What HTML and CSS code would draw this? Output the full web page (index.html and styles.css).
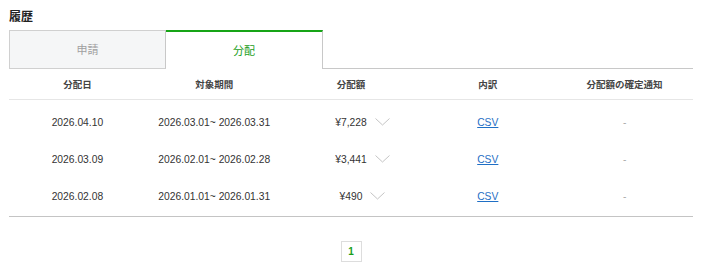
FILE: index.html
```html
<!DOCTYPE html>
<html lang="ja">
<head>
<meta charset="utf-8">
<title>履歴</title>
<link rel="stylesheet" href="styles.css">
</head>
<body>
<div class="page">
  <h2 class="title">履歴</h2>
  <div class="tabs">
    <div class="tab">申請</div>
    <div class="tab active">分配</div>
    <div class="tab-rest"></div>
  </div>
  <div class="table">
    <div class="row head">
      <div class="cell">分配日</div>
      <div class="cell">対象期間</div>
      <div class="cell">分配額</div>
      <div class="cell">内訳</div>
      <div class="cell">分配額の確定通知</div>
    </div>
    <div class="body">
      <div class="row">
        <div class="cell">2026.04.10</div>
        <div class="cell">2026.03.01~ 2026.03.31</div>
        <div class="cell"><span class="amt">¥7,228<svg class="chev" width="15" height="8" viewBox="0 0 15 8"><path d="M0.5 0.5 L7.5 7 L14.5 0.5" fill="none" stroke="#c4c4c4" stroke-width="1"/></svg></span></div>
        <div class="cell"><a class="csv" href="#">CSV</a></div>
        <div class="cell dash">-</div>
      </div>
      <div class="row">
        <div class="cell">2026.03.09</div>
        <div class="cell">2026.02.01~ 2026.02.28</div>
        <div class="cell"><span class="amt">¥3,441<svg class="chev" width="15" height="8" viewBox="0 0 15 8"><path d="M0.5 0.5 L7.5 7 L14.5 0.5" fill="none" stroke="#c4c4c4" stroke-width="1"/></svg></span></div>
        <div class="cell"><a class="csv" href="#">CSV</a></div>
        <div class="cell dash">-</div>
      </div>
      <div class="row">
        <div class="cell">2026.02.08</div>
        <div class="cell">2026.01.01~ 2026.01.31</div>
        <div class="cell"><span class="amt">¥490<svg class="chev" width="15" height="8" viewBox="0 0 15 8"><path d="M0.5 0.5 L7.5 7 L14.5 0.5" fill="none" stroke="#c4c4c4" stroke-width="1"/></svg></span></div>
        <div class="cell"><a class="csv" href="#">CSV</a></div>
        <div class="cell dash">-</div>
      </div>
    </div>
  </div>
  <div class="pager">
    <span class="page-num">1</span>
  </div>
</div>
</body>
</html>
```

FILE: styles.css
```css
html, body {
  margin: 0;
  padding: 0;
  background: #fff;
}
body {
  font-family: "Liberation Sans", "Noto Sans CJK JP", sans-serif;
  color: #333;
  font-size: 10.3px;
}
.page {
  padding: 8px 10px 0 9px;
}
.title {
  margin: 0;
  font-family: "Noto Sans CJK JP", sans-serif;
  font-size: 12px;
  font-weight: 700;
  line-height: 16px;
  height: 22px;
  color: #222;
}
.tabs {
  display: flex;
  height: 39px;
}
.tab {
  width: 157px;
  box-sizing: border-box;
  display: flex;
  align-items: center;
  justify-content: center;
  padding-bottom: 2px;
  font-family: "Noto Sans CJK JP", sans-serif;
  font-size: 11px;
  color: #a0a0a0;
  background: #f5f6f7;
  border: 1px solid #d0d0d0;
  border-right: 1px solid #c8c8c8;
}
.tab.active {
  background: #fff;
  color: #1a9e1a;
  border: none;
  border-top: 2px solid #16a416;
  border-right: 1px solid #c8c8c8;
  width: 157px;
}
.tab-rest {
  flex: 1;
  border-bottom: 1px solid #c8c8c8;
}
.table {
  border-bottom: 1px solid #c4c4c4;
  width: 684px;
}
.row {
  display: grid;
  grid-template-columns: repeat(5, 1fr);
  height: 37px;
  align-items: center;
}
.row.head {
  height: 30px;
  border-bottom: 1px solid #e6e6e6;
  font-family: "Noto Sans CJK JP", sans-serif;
  font-weight: 700;
  font-size: 9.5px;
  color: #444;
}
.body {
  padding: 4px 0 1px;
}
.cell {
  display: flex;
  justify-content: center;
  align-items: center;
  white-space: nowrap;
}
.amt {
  position: relative;
}
.chev {
  position: absolute;
  left: calc(100% + 8px);
  top: 50%;
  margin-top: -5px;
}
.csv {
  color: #1f6fc5;
  text-decoration: underline;
}
.dash {
  color: #aaa;
}
.pager {
  display: flex;
  justify-content: center;
  width: 684px;
  padding-top: 24px;
}
.page-num {
  width: 21px;
  height: 21px;
  box-sizing: border-box;
  border: 1px solid #ddd;
  display: flex;
  align-items: center;
  justify-content: center;
  color: #1a9e1a;
  font-weight: 700;
  font-size: 10px;
}
```
